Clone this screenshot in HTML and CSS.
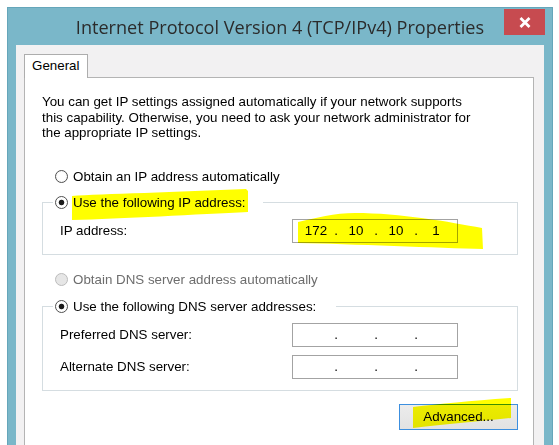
FILE: index.html
```html
<!DOCTYPE html>
<html>
<head>
<meta charset="utf-8">
<title>Internet Protocol Version 4 (TCP/IPv4) Properties</title>
<link rel="stylesheet" href="styles.css">
</head>
<body>
<div class="window">
  <div class="titlebar">
    <div class="spacer"></div>
    <div class="title">Internet Protocol Version 4 (TCP/IPv4) Properties</div>
    <div class="close"><svg width="12" height="11" viewBox="0 0 12 11"><path d="M1.5 1 L10.5 10 M10.5 1 L1.5 10" stroke="#fff" stroke-width="2.8" fill="none"/></svg></div>
  </div>
  <div class="client">
    <div class="tabs"><div class="tab">General</div></div>
    <div class="page">
      <p class="intro">You can get IP settings assigned automatically if your network supports<br>this capability. Otherwise, you need to ask your network administrator for<br>the appropriate IP settings.</p>

      <div class="option first"><span class="radio"></span><span>Obtain an IP address automatically</span></div>

      <fieldset class="group group-ip">
        <legend><span class="option"><span class="radio checked"></span><span>Use the following IP address:</span></span></legend>
        <div class="field-row">
          <span class="label">IP address:</span>
          <div class="ip"><span class="seg">172</span><span class="dot">.</span><span class="seg">10</span><span class="dot">.</span><span class="seg">10</span><span class="dot">.</span><span class="seg">1</span></div>
        </div>
      </fieldset>

      <div class="option dns-auto disabled"><span class="radio"></span><span>Obtain DNS server address automatically</span></div>

      <fieldset class="group group-dns">
        <legend><span class="option"><span class="radio checked"></span><span>Use the following DNS server addresses:</span></span></legend>
        <div class="field-row">
          <span class="label">Preferred DNS server:</span>
          <div class="ip"><span class="seg"></span><span class="dot">.</span><span class="seg"></span><span class="dot">.</span><span class="seg"></span><span class="dot">.</span><span class="seg"></span></div>
        </div>
        <div class="field-row second">
          <span class="label">Alternate DNS server:</span>
          <div class="ip"><span class="seg"></span><span class="dot">.</span><span class="seg"></span><span class="dot">.</span><span class="seg"></span><span class="dot">.</span><span class="seg"></span></div>
        </div>
      </fieldset>

      <div class="actions"><button class="btn">Advanced...</button></div>
    </div>
  </div>
</div>
<svg class="marks" width="559" height="445" viewBox="0 0 559 445">
  <path d="M72,196 C100,194 180,192 246,189 L248,191 L248,212 C200,214 120,219 72,220 Z" fill="#ffff00"/>
  <path d="M298,222 C315,218 335,213 355,213 C400,213 450,222 482,228 L483,249 C440,248 350,244 298,243 Z" fill="#ffff00"/>
  <path d="M413,407 C440,404 470,401 511,398 L511,418 C480,421 440,425 413,428 Z" fill="#ffff00"/>
</svg>
</body>
</html>
```

FILE: styles.css
```css
html, body {
  margin: 0;
  padding: 0;
}
body {
  width: 559px;
  height: 445px;
  overflow: hidden;
  background: #ffffff;
  font-family: "Liberation Sans", Arial, sans-serif;
  font-size: 13.35px;
  color: #000;
}
.window {
  margin: 7px 0 0 7px;
  width: 546px;
  height: 438px;
  box-sizing: border-box;
  background: #7ab7c9;
  border: 1px solid #65a6ba;
  border-bottom: none;
  padding: 0 8px;
  display: flex;
  flex-direction: column;
}
.titlebar {
  height: 37px;
  flex: none;
  display: grid;
  grid-template-columns: 1fr auto 1fr;
  align-items: center;
}
.title {
  font-family: "Open Sans", "Noto Sans", sans-serif;
  font-size: 18.1px;
  color: #2b2b2b;
  white-space: nowrap;
  padding-top: 1px;
}
.close {
  justify-self: end;
  align-self: start;
  margin-top: 1px;
  margin-right: -1px;
  width: 41px;
  height: 26px;
  background: #c74b50;
  display: flex;
  align-items: center;
  justify-content: center;
}
.client {
  flex: 1;
  min-height: 0;
  background: #f2f1f2;
  padding: 9px 10px 0 8px;
  display: flex;
  flex-direction: column;
}
.tabs {
  display: flex;
}
.tab {
  position: relative;
  z-index: 1;
  width: 64px;
  height: 24px;
  box-sizing: border-box;
  border: 1px solid #adadad;
  border-bottom: none;
  background: #fff;
  padding-left: 7px;
  line-height: 22px;
  margin-bottom: -1px;
}
.page {
  flex: 1;
  min-height: 0;
  background: #fff;
  border: 1px solid #b4b4b4;
  border-bottom: none;
  padding: 16px 15px 0 17px;
  display: flex;
  flex-direction: column;
  align-items: flex-start;
}
.intro {
  margin: 0;
  line-height: 15.6px;
  white-space: nowrap;
}
.option {
  display: flex;
  align-items: center;
  height: 20px;
  white-space: nowrap;
}
.option.first {
  margin-top: 26px;
  margin-left: 13px;
}
.radio {
  width: 13px;
  height: 13px;
  box-sizing: border-box;
  border-radius: 50%;
  border: 1px solid #4f4f4f;
  background: radial-gradient(circle at 50% 50%, #ffffff 0, #ffffff 45%, #ececec 100%);
  margin-right: 5px;
  flex: none;
}
.radio.checked {
  background: radial-gradient(circle at 50% 50%, #1b1b1b 0, #1b1b1b 2.4px, #ffffff 3.2px, #ffffff 100%);
}
.disabled {
  color: #6d6d6d;
}
.disabled .radio {
  border-color: #bcbcbc;
  background: #e6e6e6;
}
.group {
  margin: 0;
  width: 476px;
  box-sizing: border-box;
  border: 1px solid #d5dde1;
  padding: 6px 0 11px 10px;
  min-width: 0;
}
.group-ip {
  margin-top: 6px;
}
.group-dns {
  margin-top: 7px;
}
.group legend {
  padding: 0 17px 0 2px;
  line-height: 20px;
  height: 20px;
}
.group-dns legend {
  padding-right: 20px;
}
.option.dns-auto {
  margin-top: 15px;
  margin-left: 13px;
}
.field-row {
  display: flex;
  align-items: center;
  margin-left: 7px;
}
.field-row.second {
  margin-top: 8px;
}
.label {
  width: 232px;
  flex: none;
}
.ip {
  width: 166px;
  height: 24px;
  box-sizing: border-box;
  border: 1px solid #a3a3a3;
  background: #fff;
  padding-left: 5px;
  display: flex;
  align-items: center;
}
.seg {
  width: 36px;
  text-align: center;
  flex: none;
}
.dot {
  width: 4px;
  text-align: center;
  flex: none;
}
.actions {
  display: flex;
  justify-content: flex-end;
  width: 476px;
  margin-top: 13px;
}
.btn {
  width: 119px;
  height: 26px;
  box-sizing: border-box;
  border: 1px solid #3c8fdf;
  background: linear-gradient(#ececec, #e2e2e2);
  font-family: "Liberation Sans", Arial, sans-serif;
  font-size: 13.35px;
  color: #000;
  padding: 0;
}
.marks {
  position: absolute;
  top: 0;
  left: 0;
  pointer-events: none;
  mix-blend-mode: multiply;
}
```
